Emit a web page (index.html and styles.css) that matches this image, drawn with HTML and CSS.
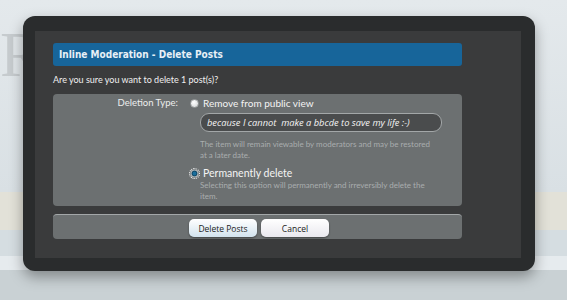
FILE: index.html
```html
<!DOCTYPE html>
<html>
<head>
  <title>Inline Moderation - Delete Posts</title>
  <link rel="stylesheet" href="styles.css">
</head>

<body>
  <div class="page">
    <div class="page-top"><span class="logo">R</span></div>
    <div class="page-band"></div>
    <div class="page-row"></div>
    <div class="page-row light"></div>
    <div class="page-foot"></div>
  </div>

  <div class="overlay">
    <div class="overlay-inner">
      <h2 class="heading">Inline Moderation - Delete Posts</h2>
      <p class="question">Are you sure you want to delete 1 post(s)?</p>

      <div class="form-panel">
        <div class="form-label">Deletion Type:</div>
        <div class="form-options">
          <label class="option">
            <span class="radio"></span>
            <span class="option-title">Remove from public view</span>
          </label>
          <input class="reason" type="text" value="because I cannot  make a bbcde to save my life :-)">
          <p class="hint">The item will remain viewable by moderators and may be restored at a later date.</p>

          <label class="option checked">
            <span class="radio on"></span>
            <span class="option-title">Permanently delete</span>
          </label>
          <p class="hint last">Selecting this option will permanently and irreversibly delete the item.</p>
        </div>
      </div>

      <div class="button-bar">
        <button class="button primary">Delete Posts</button>
        <button class="button">Cancel</button>
      </div>
    </div>
  </div>
</body>
</html>
```

FILE: styles.css
```css
body {
  margin: 0;
  padding: 0;
  background-color: #dde3e7;
  font-family: 'Lato', 'Open Sans', sans-serif;
  overflow: hidden;
}

/* blurred page behind the dialog */
.page {
  height: 300px;
  display: flex;
  flex-direction: column;
}

.page-top {
  height: 192px;
  background: linear-gradient(#e4e9ec, #d9e0e4);
  position: relative;
}

.logo {
  position: absolute;
  left: 0;
  top: 18px;
  font-family: 'Liberation Serif', serif;
  font-size: 64px;
  color: #c6cbce;
}

.page-band {
  height: 38px;
  background-color: #e2e1d8;
}

.page-row {
  height: 26px;
  background-color: #d5dde1;
}

.page-row.light {
  height: 14px;
  background-color: #e6ebee;
}

.page-foot {
  flex: 1;
  background-color: #c9d1d4;
}

/* dialog */
.overlay {
  position: absolute;
  left: 23px;
  top: 16px;
  width: 486px;
  height: 227px;
  padding: 15px 14px 13px 12px;
  background-color: #2a2c2d;
  border-radius: 12px;
  box-shadow: 0 6px 14px rgba(0, 0, 0, 0.35);
}

.overlay-inner {
  background-color: #3a3b3c;
  height: 100%;
  padding: 12px 59px 0 18px;
  box-sizing: border-box;
}

.heading {
  margin: 0;
  height: 23px;
  line-height: 23px;
  padding-left: 6px;
  background-color: #17659a;
  border-radius: 3px;
  color: #e8f0f6;
  font-family: 'DejaVu Sans Condensed', 'DejaVu Sans', sans-serif;
  font-size: 10px;
  font-weight: bold;
}

.question {
  margin: 7px 0 7px 0;
  color: #f0f0f0;
  font-size: 9px;
  line-height: 14px;
}

.form-panel {
  display: flex;
  background-color: #6c7071;
  border-radius: 4px;
  padding-top: 2px;
  height: 110px;
}

.form-label {
  width: 125px;
  text-align: right;
  color: #eceeee;
  font-size: 9.5px;
  line-height: 14px;
}

.form-options {
  padding-left: 22px;
  width: 242px;
}

.option {
  display: flex;
  align-items: center;
  gap: 4px;
  height: 14px;
  margin-left: -10px;
}

.option-title {
  color: #f4f4f4;
  font-size: 10px;
}

.option.checked .option-title {
  font-size: 10.5px;
}

.radio {
  width: 7px;
  height: 7px;
  border-radius: 50%;
  background: radial-gradient(circle at 40% 35%, #ffffff, #cfd2d3);
  border: 1px solid #9a9d9e;
}

.radio.on {
  background: radial-gradient(circle, #1a6e9c 0 1.5px, #0d3e5a 2.5px, #d8dcdd 3.5px);
  outline: 1px dotted #ffffff;
}

.reason {
  display: block;
  width: 242px;
  height: 19px;
  box-sizing: border-box;
  margin: 3px 0 7px 0;
  padding: 0 6px;
  background-color: #4a4c4d;
  border: 1px solid #a3a7a8;
  border-radius: 9px;
  color: #f4f4f4;
  font-family: 'Open Sans', 'DejaVu Sans', sans-serif;
  font-style: italic;
  font-size: 9.3px;
}

.hint {
  width: 236px;
  margin: 0 0 5px 0;
  color: #a9adae;
  font-size: 8px;
  line-height: 11px;
}

.hint.last {
  margin: 0;
}

.button-bar {
  margin-top: 8px;
  height: 25px;
  background-color: #6c7071;
  border-top: 1px solid #a3a7a8;
  border-radius: 4px;
  box-sizing: border-box;
  display: flex;
  justify-content: center;
  align-items: center;
  gap: 4px;
  padding-left: 3px;
}

.button {
  width: 68px;
  height: 18px;
  margin-top: 2px;
  border: none;
  border-radius: 5px;
  background: linear-gradient(#ffffff, #e9e8ee);
  box-shadow: 0 1px 2px rgba(0, 0, 0, 0.4);
  color: #222222;
  font-family: 'Open Sans', 'DejaVu Sans', sans-serif;
  font-size: 8.5px;
  padding: 0;
}

.button.primary {
  background: linear-gradient(#ffffff, #d2e3ee);
}
```
